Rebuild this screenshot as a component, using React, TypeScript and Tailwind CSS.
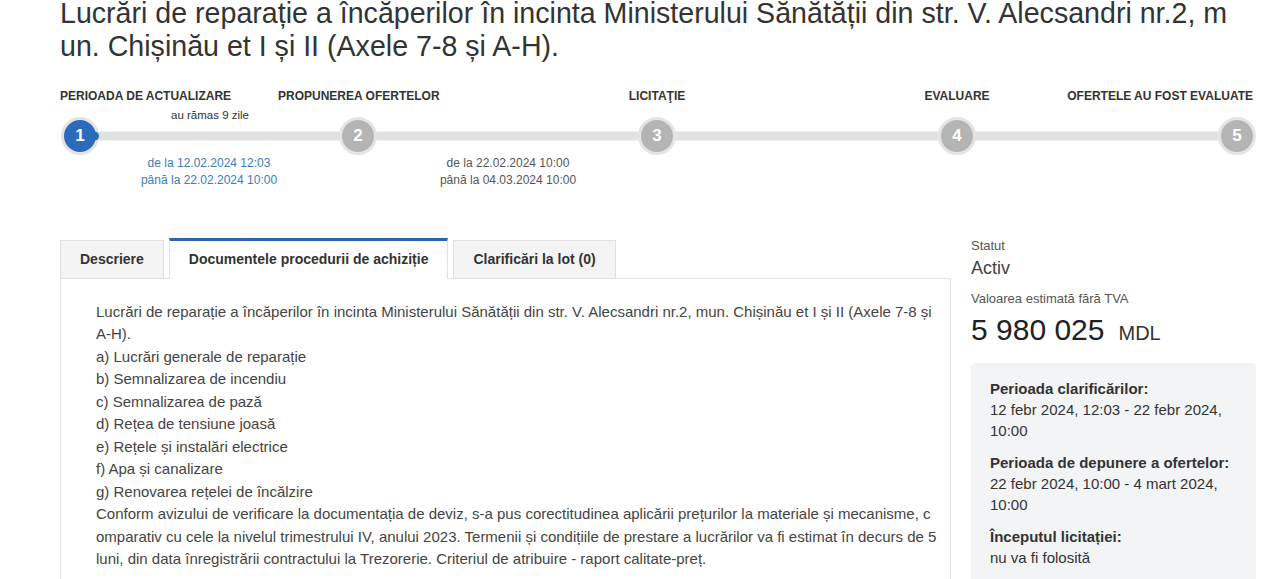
import React from "react";

const steps = ["1", "2", "3", "4", "5"];
const gaps = ["ml-[1px]", "ml-[240px]", "ml-[261px]", "ml-[262px]", "ml-[242px]"];

const works = [
  "a) Lucrări generale de reparație",
  "b) Semnalizarea de incendiu",
  "c) Semnalizarea de pază",
  "d) Rețea de tensiune joasă",
  "e) Rețele și instalări electrice",
  "f) Apa și canalizare",
  "g) Renovarea rețelei de încălzire",
];

// the source text is cut mid-word, keep its line breaks
const note = [
  "Conform avizului de verificare la documentația de deviz, s-a pus corectitudinea aplicării prețurilor la materiale și mecanisme, c",
  "omparativ cu cele la nivelul trimestrului IV, anului 2023. Termenii și condițiile de prestare a lucrărilor va fi estimat în decurs de 5",
  "luni, din data înregistrării contractului la Trezorerie. Criteriul de atribuire - raport calitate-preț.",
];

const periods = [
  { title: "Perioada clarificărilor:", value: "12 febr 2024, 12:03 - 22 febr 2024, 10:00" },
  { title: "Perioada de depunere a ofertelor:", value: "22 febr 2024, 10:00 - 4 mart 2024, 10:00" },
  { title: "Începutul licitației:", value: "nu va fi folosită" },
];

export default function App() {
  return (
    <div className="w-[1280px] h-[579px] overflow-hidden bg-white font-['Liberation_Sans',Arial,sans-serif] text-[#333]">
      <div className="pl-[60px] pr-[24px]">
        <h1 className="-mt-[3px] text-[28.6px] leading-[33.4px] font-normal text-[#333]">
          <span className="block">Lucrări de reparație a încăperilor în incinta Ministerului Sănătății din str. V. Alecsandri nr.2, m</span>
          <span className="block">un. Chișinău et I și II (Axele 7-8 și A-H).</span>
        </h1>

        {/* stepper */}
        <div className="mt-[25px] flex text-[12px] leading-[14px] font-bold uppercase text-[#333]">
          <div className="w-[218px]">Perioada de actualizare</div>
          <div className="w-[322px]">Propunerea ofertelor</div>
          <div className="w-[114px] text-center">Licitaţie</div>
          <div className="w-[186px]" />
          <div className="w-[114px] text-center">Evaluare</div>
          <div className="flex-1 text-right pr-[3px]">Ofertele au fost evaluate</div>
        </div>
        <div className="mt-[5px] h-[14px] flex text-[11.5px] leading-[14px] text-[#333]">
          <div className="w-[300px] text-center">au rămas 9 zile</div>
        </div>
        <div className="relative -mt-[5px] flex items-center h-[38px]">
          <div className="absolute left-[20px] right-[19px] top-1/2 -translate-y-1/2 h-[9px] bg-[#e2e2e2]" />
          {steps.map((s, i) => (
            <div
              key={s}
              className={`relative z-10 ${gaps[i]} w-[38px] h-[38px] rounded-full border-[3px] border-[#e4e4e4] flex items-center justify-center text-[17px] font-bold text-white ${
                i === 0 ? "bg-[#2a6cb9]" : "bg-[#b4b4b4]"
              }`}
            >
              {i === 0 && (
                <span className="absolute left-[26px] top-1/2 -translate-y-1/2 w-[9px] h-[9px] rounded-full bg-[#2a6cb9]" />
              )}
              <span className="relative">{s}</span>
            </div>
          ))}
        </div>
        <div className="flex text-[12px] leading-[17px]">
          <div className="w-[298px] text-center text-[#3b7cc0]">
            <div>de la 12.02.2024 12:03</div>
            <div>până la 22.02.2024 10:00</div>
          </div>
          <div className="w-[300px] text-center text-[#555]">
            <div>de la 22.02.2024 10:00</div>
            <div>până la 04.03.2024 10:00</div>
          </div>
        </div>

        {/* main */}
        <div className="mt-[49px] flex items-start gap-[20px]">
          <div className="w-[891px]">
            <div className="flex items-end gap-[5px] h-[41px] border-b border-[#e1e1e1] text-[14px] font-bold text-[#333]">
              <div className="h-[39px] -mb-px px-[19px] flex items-center bg-[#f4f4f4] border border-[#e1e1e1]">Descriere</div>
              <div className="h-[41px] -mb-px px-[19px] flex items-center bg-white border-x border-t-[3px] border-x-[#e1e1e1] border-t-[#2e63ad]">
                Documentele procedurii de achiziție
              </div>
              <div className="h-[39px] -mb-px px-[19px] flex items-center bg-[#f4f4f4] border border-[#e1e1e1]">Clarificări la lot (0)</div>
            </div>
            <div className="border-x border-[#e1e1e1] pl-[35px] pr-[14px] pt-[22px] pb-[40px] text-[15px] leading-[22.5px] text-[#444]">
              <p>
                Lucrări de reparație a încăperilor în incinta Ministerului Sănătății din str. V. Alecsandri nr.2, mun. Chișinău et I și II (Axele 7-8 și A-H).
              </p>
              {works.map((w) => (
                <p key={w}>{w}</p>
              ))}
              {note.map((l) => (
                <p key={l} className="whitespace-nowrap">{l}</p>
              ))}
            </div>
          </div>

          <div className="w-[285px] flex flex-col">
            <div className="text-[13px] leading-[16px] text-[#555]">Statut</div>
            <div className="mt-[3px] text-[18px] leading-[22px] text-[#444]">Activ</div>
            <div className="mt-[12px] text-[13px] leading-[16px] text-[#555]">Valoarea estimată fără TVA</div>
            <div className="mt-[5px] flex items-baseline text-[#222]">
              <span className="text-[30px] leading-[36px]">5 980 025</span>
              <span className="ml-[14px] text-[20px] text-[#333]">MDL</span>
            </div>
            <div className="mt-[15px] rounded-[5px] bg-[#f3f4f6] px-[19px] pt-[15px] pb-[20px] text-[15px] leading-[21px] text-[#333]">
              {periods.map((p) => (
                <div key={p.title} className="mb-[11px]">
                  <div className="font-bold">{p.title}</div>
                  <div>{p.value}</div>
                </div>
              ))}
            </div>
          </div>
        </div>
      </div>
    </div>
  );
}
